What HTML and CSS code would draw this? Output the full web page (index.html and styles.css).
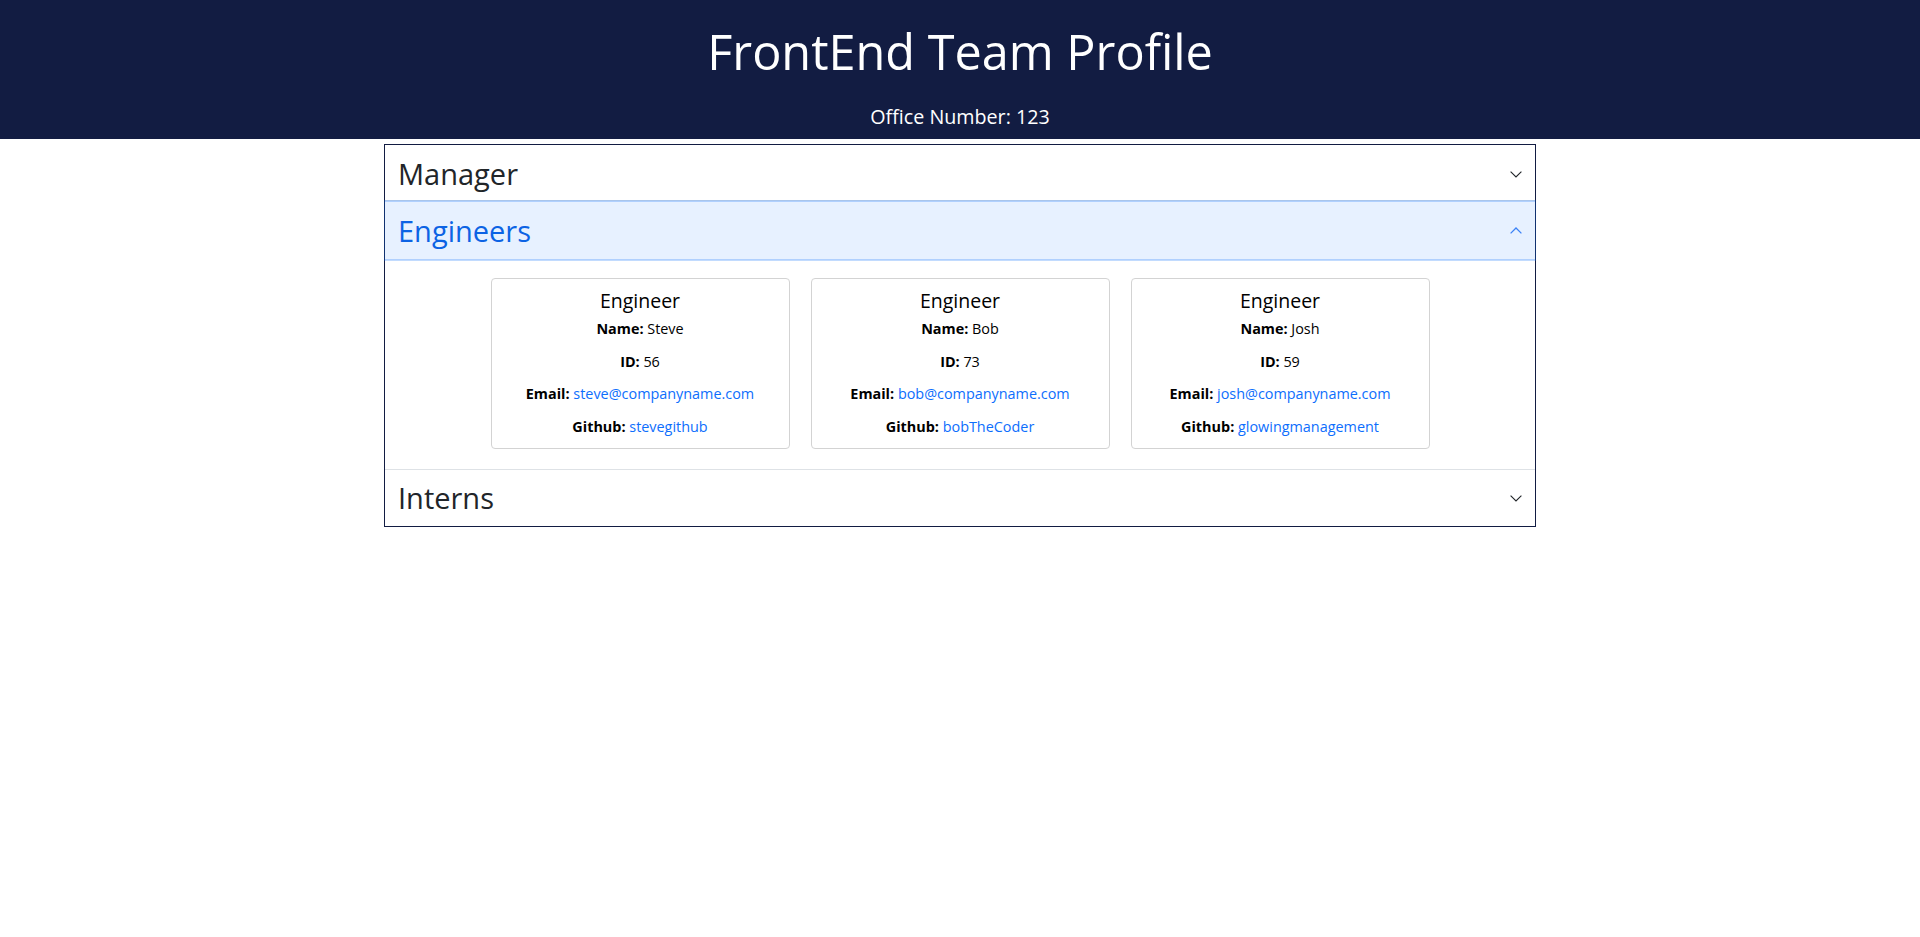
FILE: index.html
```html
<!DOCTYPE html>
<html lang="en">
<head>
<meta charset="utf-8">
<title>FrontEnd Team Profile</title>
<link rel="stylesheet" href="styles.css">
</head>
<body>
<header class="top">
  <h1 class="title">FrontEnd Team Profile</h1>
  <p class="office">Office Number: 123</p>
</header>

<main class="accordion">
  <section class="item">
    <h2 class="item-head head-manager">
      <span class="label">Manager</span>
      <svg class="chev" width="12" height="7" viewBox="0 0 12 7"><polyline points="0.6,0.6 6,6 11.4,0.6" fill="none" stroke="#212529" stroke-width="1.1"/></svg>
    </h2>
  </section>

  <section class="item">
    <h2 class="item-head head-open">
      <span class="label">Engineers</span>
      <svg class="chev" width="12" height="7" viewBox="0 0 12 7"><polyline points="0.6,6.4 6,1 11.4,6.4" fill="none" stroke="#3b82f6" stroke-width="1.3"/></svg>
    </h2>
    <div class="item-body">
      <div class="card">
        <h3 class="card-title">Engineer</h3>
        <p class="row"><b>Name:</b> Steve</p>
        <p class="row"><b>ID:</b> 56</p>
        <p class="row"><b>Email:</b> <a href="#">steve@companyname.com</a></p>
        <p class="row"><b>Github:</b> <a href="#">stevegithub</a></p>
      </div>
      <div class="card">
        <h3 class="card-title">Engineer</h3>
        <p class="row"><b>Name:</b> Bob</p>
        <p class="row"><b>ID:</b> 73</p>
        <p class="row"><b>Email:</b> <a href="#">bob@companyname.com</a></p>
        <p class="row"><b>Github:</b> <a href="#">bobTheCoder</a></p>
      </div>
      <div class="card">
        <h3 class="card-title">Engineer</h3>
        <p class="row"><b>Name:</b> Josh</p>
        <p class="row"><b>ID:</b> 59</p>
        <p class="row"><b>Email:</b> <a href="#">josh@companyname.com</a></p>
        <p class="row"><b>Github:</b> <a href="#">glowingmanagement</a></p>
      </div>
    </div>
  </section>

  <section class="item item-last">
    <h2 class="item-head head-interns">
      <span class="label">Interns</span>
      <svg class="chev" width="12" height="7" viewBox="0 0 12 7"><polyline points="0.6,0.6 6,6 11.4,0.6" fill="none" stroke="#212529" stroke-width="1.1"/></svg>
    </h2>
  </section>
</main>
</body>
</html>
```

FILE: styles.css
```css
* { box-sizing: border-box; }

html, body {
  margin: 0;
  padding: 0;
  background: #ffffff;
  font-family: "Open Sans", "Noto Sans", sans-serif;
  color: #212529;
}

.top {
  background: #121c42;
  color: #ffffff;
  text-align: center;
  padding: 21px 0 10px;
  height: 139px;
}

.title {
  margin: 0 0 24px;
  font-size: 48.6px;
  font-weight: 400;
  line-height: 60px;
}

.office {
  margin: 0;
  font-size: 19.7px;
  line-height: 24px;
}

.accordion {
  width: 1152px;
  margin: 5px auto 0;
  border: 1px solid #121c42;
}

.item-head {
  margin: 0;
  display: flex;
  align-items: flex-start;
  font-size: 29px;
  font-weight: 400;
  line-height: 38px;
  padding: 0 13px 0 13px;
  color: #212529;
}

.label { flex: 1; }

.chev { display: block; flex: none; }

.head-manager {
  height: 56px;
  padding-top: 10px;
  padding-bottom: 7px;
  border-bottom: 1px solid #dee2e6;
}
.head-manager .chev { margin-top: 16px; }

.head-open {
  position: relative;
  z-index: 2;
  height: 59px;
  padding-top: 11px;
  padding-bottom: 10px;
  background: #e7f1ff;
  color: #0c63e4;
  box-shadow: 0 0 0 1px rgba(13, 110, 253, 0.25),
              inset 0 1px 0 rgba(13, 110, 253, 0.25),
              inset 0 -1px 0 rgba(13, 110, 253, 0.25);
}
.head-open .chev { margin-top: 15px; }

.head-interns {
  height: 57px;
  padding-top: 9px;
  padding-bottom: 9px;
  border-top: 1px solid #dee2e6;
}
.head-interns .chev { margin-top: 16px; }

.item-body {
  display: flex;
  justify-content: center;
  gap: 21px;
  padding: 18px 0 20px;
}

.card {
  width: 299px;
  border: 1px solid #d3d3d3;
  border-radius: 4px;
  padding: 10px 8px 11px;
  text-align: center;
  color: #000000;
}

.card-title {
  margin: 0 0 6px;
  font-size: 19.5px;
  font-weight: 400;
  line-height: 23.4px;
}

.row {
  margin: 0 0 11.5px;
  font-size: 14.4px;
  line-height: 21px;
}
.row:last-child { margin-bottom: 0; }

.row b { font-weight: 700; }

.row a {
  color: #0d6efd;
  text-decoration: none;
}
```
